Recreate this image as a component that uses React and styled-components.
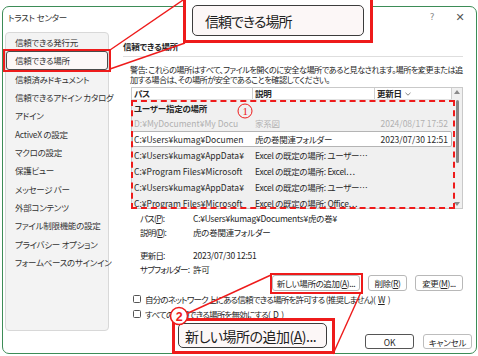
import React from 'react';
import styled, { createGlobalStyle } from 'styled-components';

const RED = '#ee1b1b';

const GlobalStyle = createGlobalStyle`
  html, body { margin: 0; padding: 0; background: #fff; }
  body {
    font-family: "Noto Sans CJK JP", "Noto Sans", sans-serif;
    font-size: 8.5px;
    color: #262626;
    letter-spacing: -0.25px;
    font-feature-settings: "palt";
  }
  * { box-sizing: border-box; }
`;

const Frame = styled.div`
  position: relative;
  width: 478px;
  height: 356px;
  overflow: hidden;
`;

const Dialog = styled.div`
  margin: 6px 0 0 2px;
  width: 475px;
  height: 348px;
  border: 1px solid #3d8c57;
  border-radius: 7px;
  background: #fff;
  display: flex;
  flex-direction: column;
`;

const TitleBar = styled.div`
  height: 20px;
  display: flex;
  align-items: center;
  padding: 0 2px 0 5px;
`;

const Title = styled.div`
  flex: 1;
  color: #333;
`;

const TitleButton = styled.div`
  width: 28px;
  text-align: center;
  font-family: "DejaVu Sans", sans-serif;
  font-size: ${p => p.$size}px;
  color: ${p => (p.$dark ? '#555' : '#8a8a8a')};
`;

const Body = styled.div`
  flex: 1;
  display: flex;
  gap: 14px;
  padding: 5px 13px 0 2px;
`;

const Nav = styled.div`
  width: 104px;
  height: 299px;
  background: #f3f3f3;
  border: 1px solid #d8d8d8;
  border-radius: 4px;
  display: flex;
  flex-direction: column;
  letter-spacing: -0.3px;
`;

const NavItem = styled.div`
  height: 18.33px;
  display: flex;
  align-items: center;
  padding-left: 8px;
  white-space: nowrap;
  color: #333;
  border: 1px solid ${p => (p.$active ? '#4a4a4a' : 'transparent')};
  border-radius: 3px;
  background: ${p => (p.$active ? '#fcf7f7' : 'transparent')};
`;

const Content = styled.div`
  flex: 1;
  min-width: 0;
  display: flex;
  flex-direction: column;
`;

const Heading = styled.div`
  margin-top: 8px;
  line-height: 12px;
  padding-bottom: 4px;
  border-bottom: 1px solid #dedede;
  font-weight: bold;
`;

const Warning = styled.p`
  margin: 7px 0 0 7px;
  font-size: 8.2px;
  line-height: 10px;
  white-space: nowrap;
  letter-spacing: -0.55px;
`;

const Table = styled.div`
  margin: 3px 0 0 8px;
  height: 122px;
  border: 1px solid #c9c9c9;
  background: #f0f0f0;
  display: flex;
  overflow: hidden;
`;

const List = styled.div`
  flex: 1;
  min-width: 0;
  display: flex;
  flex-direction: column;
`;

const HeaderRow = styled.div`
  height: 12px;
  flex: none;
  display: grid;
  grid-template-columns: 121px 122px 1fr;
  background: #fff;
  border-bottom: 1px solid #e2e2e2;
`;

const HeaderCell = styled.div`
  padding-left: 2px;
  line-height: 11px;
  font-weight: bold;
  border-right: 1px solid #cfcfcf;
  display: flex;
  align-items: center;
  gap: 3px;
`;

const GroupRow = styled.div`
  height: 15px;
  flex: none;
  padding-left: 2px;
  display: flex;
  align-items: center;
  font-weight: bold;
`;

const Row = styled.div`
  height: 16px;
  flex: none;
  display: grid;
  grid-template-columns: 121px 122px 1fr;
  align-items: center;
  color: ${p => (p.$dim ? '#b0b0b0' : '#2a2a2a')};
  background: ${p => (p.$selected ? '#fff' : 'transparent')};
  box-shadow: ${p => (p.$selected ? 'inset 0 0 0 1px #b4b4b4' : 'none')};
  border-radius: 2px;
`;

const Cell = styled.div`
  padding: 0 ${p => (p.$right ? '4px' : '0')} 0 2px;
  white-space: nowrap;
  overflow: hidden;
  text-align: ${p => (p.$right ? 'right' : 'left')};
  letter-spacing: ${p => (p.$path ? '0' : '-0.3px')};
`;

const Scrollbar = styled.div`
  width: 10px;
  flex: none;
  display: flex;
  flex-direction: column;
  align-items: center;
`;

const ScrollArrow = styled.div`
  height: 8px;
  display: flex;
  align-items: center;
  justify-content: center;
`;

const Thumb = styled.div`
  width: 3px;
  height: 63px;
  margin-top: 4px;
  border-radius: 2px;
  background: #858585;
`;

const ScrollSpace = styled.div`
  flex: 1;
`;

const DetailGroup = styled.div`
  margin: ${p => p.$top}px 0 0 17px;
`;

const DetailRow = styled.div`
  height: 14px;
  display: flex;
  align-items: center;
  white-space: nowrap;
`;

const DetailLabel = styled.span`
  width: 53px;
  flex: none;
  letter-spacing: -0.8px;
`;

const ButtonRow = styled.div`
  margin-top: -1px;
  display: flex;
  justify-content: flex-end;
  gap: 8px;
`;

const Button = styled.div`
  width: ${p => p.$w}px;
  height: 16px;
  display: flex;
  align-items: center;
  justify-content: center;
  background: #fff;
  border: 1px solid #b8b8b8;
  border-radius: 3px;
  white-space: nowrap;
  letter-spacing: -0.4px;
`;

const CheckRow = styled.div`
  height: 15px;
  margin-left: 10px;
  display: flex;
  align-items: center;
  gap: 3px;
  white-space: nowrap;
  letter-spacing: -0.8px;
  &:first-of-type { margin-top: 1px; }
`;

const Box = styled.span`
  width: 8px;
  height: 8px;
  margin-right: 1px;
  border: 1px solid #555;
  border-radius: 1.5px;
  background: #fff;
`;

const Footer = styled.div`
  display: flex;
  justify-content: flex-end;
  gap: 9px;
  padding: 0 4px 4px 0;
`;

const FooterButton = styled.div`
  width: 49px;
  height: 15px;
  display: flex;
  align-items: center;
  justify-content: center;
  background: #fff;
  border: 1px solid ${p => (p.$default ? '#555' : '#bdbdbd')};
  border-radius: 3px;
`;

/* annotation layer */

const NavMark = styled.div`
  position: absolute;
  left: 3px;
  top: 49px;
  width: 108px;
  height: 23px;
  border: 2.5px solid ${RED};
`;

const ButtonMark = styled.div`
  position: absolute;
  left: 270px;
  top: 273px;
  width: 93px;
  height: 21px;
  border: 2.5px solid ${RED};
`;

const DashedMark = styled.div`
  position: absolute;
  left: 131px;
  top: 100px;
  width: 324px;
  height: 109px;
  border: 2px dashed ${RED};
`;

const Callout = styled.div`
  position: absolute;
  display: flex;
  background: #fff;
  border: 3px solid ${RED};
`;

const TopCallout = styled(Callout)`
  left: 183px;
  top: -4px;
  width: 190px;
  height: 47px;
  padding: 6px 6px 4px 6px;
`;

const BottomCallout = styled(Callout)`
  left: 172px;
  top: 318px;
  width: 163px;
  height: 36px;
  padding: 2px 5px 3px 3px;
`;

const BigButton = styled.div`
  flex: 1;
  display: flex;
  align-items: center;
  padding-left: ${p => p.$pad}px;
  background: #fcf7f7;
  border: 1px solid #3c3c3c;
  border-radius: 5px;
  font-size: 14px;
  letter-spacing: ${p => p.$ls}px;
  color: #222;
  white-space: nowrap;
`;

const Overlay = styled.svg`
  position: absolute;
  left: 0;
  top: 0;
  pointer-events: none;
`;

const Chevron = () => (
  <svg width="6" height="4" viewBox="0 0 6 4">
    <path d="M0.5 0.8 L3 3.2 L5.5 0.8" fill="none" stroke="#777" strokeWidth="0.9" />
  </svg>
);

const Arrow = ({ up }) => (
  <svg width="6" height="4" viewBox="0 0 6 4">
    <path d={up ? 'M0 4 L3 0 L6 4 Z' : 'M0 0 L3 4 L6 0 Z'} fill="#8a8a8a" />
  </svg>
);

const navItems = [
  '信頼できる発行元',
  '信頼できる場所',
  '信頼済みドキュメント',
  '信頼できるアドイン カタログ',
  'アドイン',
  'ActiveX の設定',
  'マクロの設定',
  '保護ビュー',
  'メッセージ バー',
  '外部コンテンツ',
  'ファイル制限機能の設定',
  'プライバシー オプション',
  'フォームベースのサインイン',
];

const rows = [
  { path: 'D:¥MyDocument¥My Docu', desc: '家系図', date: '2024/08/17 17:52', dim: true },
  { path: 'C:¥Users¥kumag¥Documen', desc: '虎の巻関連フォルダー', date: '2023/07/30 12:51', selected: true },
  { path: 'C:¥Users¥kumag¥AppData¥', desc: 'Excel の既定の場所: ユーザー…', date: '' },
  { path: 'C:¥Program Files¥Microsoft', desc: 'Excel の既定の場所: Excel…', date: '' },
  { path: 'C:¥Users¥kumag¥AppData¥', desc: 'Excel の既定の場所: ユーザー…', date: '' },
  { path: 'C:¥Program Files¥Microsoft', desc: 'Excel の既定の場所: Office…', date: '' },
];

export default function App() {
  return (
    <>
      <GlobalStyle />
      <Frame>
        <Dialog>
          <TitleBar>
            <Title>トラスト センター</Title>
            <TitleButton $size={9}>?</TitleButton>
            <TitleButton $size={11} $dark>✕</TitleButton>
          </TitleBar>
          <Body>
            <Nav>
              {navItems.map((item, i) => (
                <NavItem key={item} $active={i === 1}>{item}</NavItem>
              ))}
            </Nav>
            <Content>
              <Heading>信頼できる場所</Heading>
              <Warning>
                警告: これらの場所はすべて、ファイルを開くのに安全な場所であると見なされます。場所を変更または追<br />
                加する場合は、その場所が安全であることを確認してください。
              </Warning>
              <Table>
                <List>
                  <HeaderRow>
                    <HeaderCell>パス</HeaderCell>
                    <HeaderCell>説明</HeaderCell>
                    <HeaderCell>更新日<Chevron /></HeaderCell>
                  </HeaderRow>
                  <GroupRow>ユーザー指定の場所</GroupRow>
                  {rows.map((r, i) => (
                    <Row key={i} $dim={r.dim} $selected={r.selected}>
                      <Cell $path>{r.path}</Cell>
                      <Cell>{r.desc}</Cell>
                      <Cell $right $path>{r.date}</Cell>
                    </Row>
                  ))}
                </List>
                <Scrollbar>
                  <ScrollArrow><Arrow up /></ScrollArrow>
                  <Thumb />
                  <ScrollSpace />
                  <ScrollArrow><Arrow /></ScrollArrow>
                </Scrollbar>
              </Table>
              <DetailGroup $top={2}>
                <DetailRow><DetailLabel>パス(<u>P</u>):</DetailLabel>C:¥Users¥kumag¥Documents¥虎の巻¥</DetailRow>
                <DetailRow><DetailLabel>説明(<u>D</u>):</DetailLabel>虎の巻関連フォルダー</DetailRow>
              </DetailGroup>
              <DetailGroup $top={9}>
                <DetailRow><DetailLabel>更新日:</DetailLabel>2023/07/30 12:51</DetailRow>
                <DetailRow><DetailLabel>サブフォルダー:</DetailLabel>許可</DetailRow>
              </DetailGroup>
              <ButtonRow>
                <Button $w={88}>新しい場所の追加(<u>A</u>)...</Button>
                <Button $w={39}>削除(<u>R</u>)</Button>
                <Button $w={48}>変更(<u>M</u>)...</Button>
              </ButtonRow>
              <CheckRow><Box />自分のネットワーク上にある信頼できる場所を許可する (推奨しません)(<u>W</u>)</CheckRow>
              <CheckRow><Box />すべての信頼できる場所を無効にする(<u>D</u>)</CheckRow>
            </Content>
          </Body>
          <Footer>
            <FooterButton $default>OK</FooterButton>
            <FooterButton>キャンセル</FooterButton>
          </Footer>
        </Dialog>

        <NavMark />
        <DashedMark />
        <ButtonMark />
        <TopCallout>
          <BigButton $pad={12} $ls={-1}>信頼できる場所</BigButton>
        </TopCallout>
        <BottomCallout>
          <BigButton $pad={6} $ls={-0.5}>新しい場所の追加(<u>A</u>)...</BigButton>
        </BottomCallout>

        <Overlay width="478" height="356" viewBox="0 0 478 356">
          <g stroke={RED} strokeWidth="1.4" fill="none">
            <line x1="110" y1="50" x2="186" y2="-2" />
            <line x1="110" y1="69" x2="185" y2="43" />
            <line x1="271" y1="275" x2="173" y2="320" />
            <line x1="361" y1="292" x2="333" y2="354" />
          </g>
          <circle cx="245" cy="111" r="7" fill="none" stroke={RED} strokeWidth="1" />
          <text x="245" y="115" textAnchor="middle" fontSize="11" fill={RED} fontFamily="Liberation Serif, serif">1</text>
          <circle cx="179" cy="316" r="8.5" fill="#fff" stroke={RED} strokeWidth="1.5" />
          <text x="179" y="320.5" textAnchor="middle" fontSize="12.5" fontWeight="bold" fill={RED} fontFamily="Liberation Sans, sans-serif">2</text>
        </Overlay>
      </Frame>
    </>
  );
}
